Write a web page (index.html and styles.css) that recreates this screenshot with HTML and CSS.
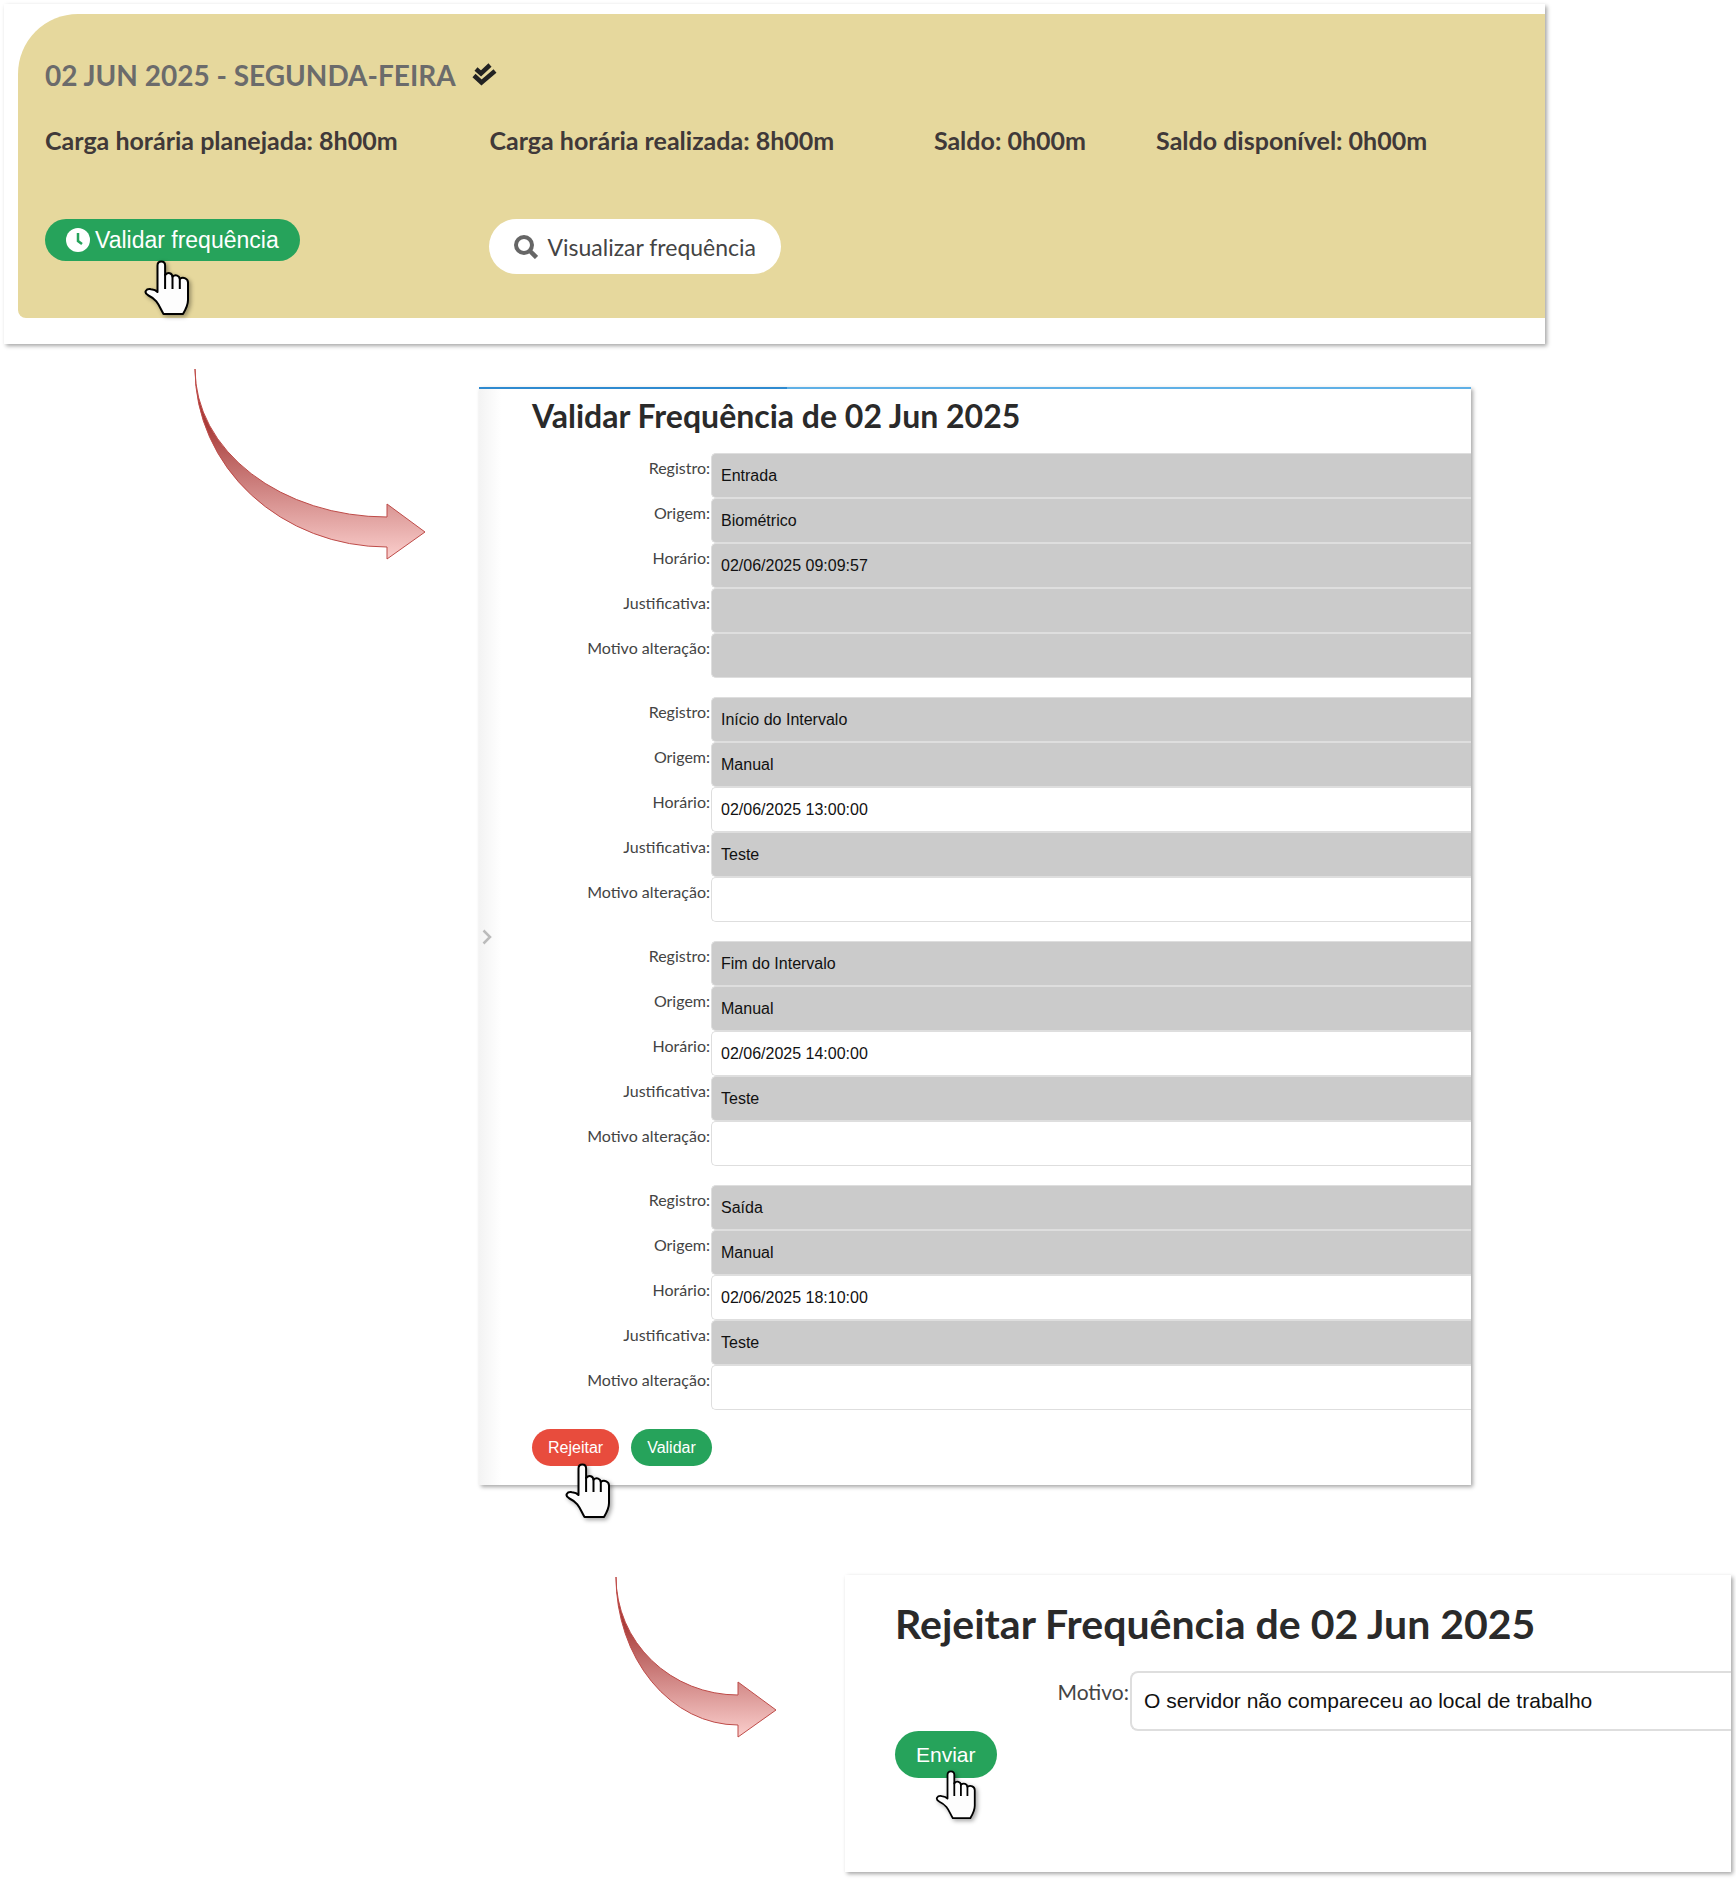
FILE: index.html
```html
<!DOCTYPE html>
<html lang="pt-BR">
<head>
  <meta charset="UTF-8">
  <title>Validar Frequência</title>
  <link rel="stylesheet" href="styles.css">
</head>
<body>
  <!-- Shared shapes -->
  <svg class="defs" width="0" height="0" aria-hidden="true">
    <defs>
      <linearGradient id="arrow-fill" x1="0" y1="0" x2="0" y2="1">
        <stop offset="0.3" stop-color="#a93c39"/>
        <stop offset="0.5" stop-color="#c06a68"/>
        <stop offset="1" stop-color="#fbcfcd"/>
      </linearGradient>
      <symbol id="hand" viewBox="0 0 46 56">
        <path d="M13.500 32V5.500c0-5.400 7.600-5.400 7.600 0V15c3-3.500 7-1.600 7.400 1.600 3.200-2.600 6.900-.800 7.300 2.200 3.600-2.200 8.200-.2 8.200 3.800V40c0 5-2.300 9.500-5 14H19.500C15 46.500 14 40 4.500 35.500c-5.500-3-2.500-7 2.500-6.300 3 .3 5 1 6.500 2.800z" fill="#fdfdfd" stroke="#000" stroke-width="2" stroke-linejoin="round"/>
        <path d="M21.100 14v15M28.500 16v13M35.800 18v11" fill="none" stroke="#000" stroke-width="2"/>
      </symbol>
    </defs>
  </svg>

  <div class="panel panel-day">
    <div class="day-card">
      <h3 class="day-title">02 JUN 2025 - SEGUNDA-FEIRA
        <svg class="check-icon" viewBox="0 0 26 24"><path d="M4 6l5 4.500L18 2M2 12.500l7.500 7L23 8" fill="none" stroke="#222" stroke-width="4.500"/></svg>
      </h3>
      <div class="day-grid">
        <div class="stat">Carga horária planejada: 8h00m</div>
        <div class="stat">Carga horária realizada: 8h00m</div>
        <div class="stat">Saldo: 0h00m</div>
        <div class="stat">Saldo disponível: 0h00m</div>
        <div class="action">
          <button class="btn btn-green btn-day" type="button">
            <svg class="clock-icon" viewBox="0 0 24 24"><circle cx="12" cy="12" r="12" fill="#fff"/><path d="M12 5v8l4 3" fill="none" stroke="#26a35b" stroke-width="2.500"/></svg>
            Validar frequência
          </button>
          <svg class="cursor cursor-day"><use href="#hand"/></svg>
        </div>
        <div class="action">
          <button class="btn btn-white" type="button">
            <svg class="search-icon" viewBox="0 0 24 24"><circle cx="10" cy="10" r="8" fill="none" stroke="#666" stroke-width="4"/><path d="M15.500 15.500l7 7" stroke="#666" stroke-width="4.500"/></svg>
            Visualizar frequência
          </button>
        </div>
      </div>
    </div>
  </div>

  <div class="step step-validate">
    <svg class="arrow arrow-long" viewBox="0 0 234 192">
      <path d="M1 1A192 148 0 0 0 193 149V136L231 164 193 191V179A192 178 0 0 1 1 1z" fill="url(#arrow-fill)" stroke="#be4b48"/>
    </svg>
    <div class="panel panel-validate">
      <div class="progress"><div class="progress-done"></div></div>
      <div class="side"><svg class="chevron" viewBox="0 0 10 16"><path d="M1.500 1.500L8 8l-6.500 6.500" fill="none" stroke="#bbb" stroke-width="2.500"/></svg></div>
      <form class="form">
        <h2 class="form-title">Validar Frequência de 02 Jun 2025</h2>

        <div class="group">
          <label for="registro1">Registro:</label>
          <input id="registro1" type="text" value="Entrada" readonly>
          <label for="origem1">Origem:</label>
          <input id="origem1" type="text" value="Biométrico" readonly>
          <label for="horario1">Horário:</label>
          <input id="horario1" type="text" value="02/06/2025 09:09:57" readonly>
          <label for="justificativa1">Justificativa:</label>
          <input id="justificativa1" type="text" value="" readonly>
          <label for="motivo1">Motivo alteração:</label>
          <input id="motivo1" type="text" value="" readonly>
        </div>

        <div class="group">
          <label for="registro2">Registro:</label>
          <input id="registro2" type="text" value="Início do Intervalo" readonly>
          <label for="origem2">Origem:</label>
          <input id="origem2" type="text" value="Manual" readonly>
          <label for="horario2">Horário:</label>
          <input id="horario2" type="text" value="02/06/2025 13:00:00">
          <label for="justificativa2">Justificativa:</label>
          <input id="justificativa2" type="text" value="Teste" readonly>
          <label for="motivo2">Motivo alteração:</label>
          <input id="motivo2" type="text" value="">
        </div>

        <div class="group">
          <label for="registro3">Registro:</label>
          <input id="registro3" type="text" value="Fim do Intervalo" readonly>
          <label for="origem3">Origem:</label>
          <input id="origem3" type="text" value="Manual" readonly>
          <label for="horario3">Horário:</label>
          <input id="horario3" type="text" value="02/06/2025 14:00:00">
          <label for="justificativa3">Justificativa:</label>
          <input id="justificativa3" type="text" value="Teste" readonly>
          <label for="motivo3">Motivo alteração:</label>
          <input id="motivo3" type="text" value="">
        </div>

        <div class="group">
          <label for="registro4">Registro:</label>
          <input id="registro4" type="text" value="Saída" readonly>
          <label for="origem4">Origem:</label>
          <input id="origem4" type="text" value="Manual" readonly>
          <label for="horario4">Horário:</label>
          <input id="horario4" type="text" value="02/06/2025 18:10:00">
          <label for="justificativa4">Justificativa:</label>
          <input id="justificativa4" type="text" value="Teste" readonly>
          <label for="motivo4">Motivo alteração:</label>
          <input id="motivo4" type="text" value="">
        </div>

        <div class="buttons">
          <button class="btn btn-red" type="button">Rejeitar</button>
          <button class="btn btn-green" type="button">Validar</button>
          <svg class="cursor cursor-reject"><use href="#hand"/></svg>
        </div>
      </form>
    </div>
  </div>

  <div class="step step-reject">
    <svg class="arrow arrow-short" viewBox="0 0 163 163">
      <path d="M1 1A122 118 0 0 0 123 119V106L161 134 123 161V149A122 148 0 0 1 1 1z" fill="url(#arrow-fill)" stroke="#be4b48"/>
    </svg>
    <div class="panel panel-reject">
      <form class="form form-large">
        <h2 class="form-title">Rejeitar Frequência de 02 Jun 2025</h2>
        <div class="group">
          <label for="motivo">Motivo:</label>
          <input id="motivo" type="text" value="O servidor não compareceu ao local de trabalho">
        </div>
        <div class="buttons">
          <button class="btn btn-green" type="button">Enviar</button>
          <svg class="cursor cursor-send"><use href="#hand"/></svg>
        </div>
      </form>
    </div>
  </div>
</body>
</html>
```

FILE: styles.css
```css
* {
  box-sizing: border-box;
}

body {
  margin: 0;
  padding: 4px 5px 8px 4px;
  background-color: #fff;
  color: #444;
  font-family: Lato, sans-serif;
}

h2,
h3 {
  margin: 0;
}

svg {
  display: block;
}

.defs {
  position: absolute;
}

.panel {
  position: relative;
  background-color: #fff;
  box-shadow: 2px 2px 4px rgba(0, 0, 0, 0.35);
}

/* Day card */
.panel-day {
  margin-right: 186px;
  padding: 10px 0 26px 14px;
}

.day-card {
  padding: 44px 0 44px 27px;
  background-color: #e6d89d;
  border-radius: 60px 0 0 8px;
}

.day-title {
  display: flex;
  align-items: center;
  gap: 16px;
  color: #6b6b6b;
  font-size: 28px;
  line-height: 34px;
}

.check-icon {
  width: 26px;
  height: 24px;
}

.day-grid {
  display: grid;
  grid-template-columns: 8fr 8fr 4fr 7fr;
  row-gap: 65px;
  align-items: start;
  margin-top: 34px;
}

.stat {
  color: #403939;
  font-size: 25px;
  font-weight: bold;
  line-height: 28px;
  white-space: nowrap;
}

.action {
  position: relative;
}

/* Buttons */
.btn {
  display: flex;
  align-items: center;
  justify-content: center;
  height: 37px;
  padding: 0 16px;
  border: none;
  border-radius: 30px;
  color: #fff;
  font-family: "Liberation Sans", Arial, sans-serif;
  font-size: 16px;
  cursor: pointer;
}

.btn-green {
  background-color: #26a35b;
}

.btn-red {
  background-color: #e84c3d;
}

.btn-day {
  height: 42px;
  gap: 5px;
  padding: 0 21px;
  font-size: 23px;
}

.btn-white {
  height: 55px;
  gap: 9px;
  padding: 0 25px;
  background-color: #fff;
  color: #444;
  font-family: Lato, sans-serif;
  font-size: 23px;
}

.clock-icon,
.search-icon {
  width: 24px;
  height: 24px;
}

.cursor {
  position: absolute;
  width: 46px;
  height: 56px;
  filter: drop-shadow(2px 2px 2px rgba(0, 0, 0, 0.35));
}

.cursor-day {
  top: 41px;
  left: 99px;
}

.cursor-reject {
  top: 34px;
  left: 33px;
}

.cursor-send {
  top: 39px;
  left: 40px;
  width: 42px;
  height: 50px;
}

/* Steps with the arrow on the left */
.step {
  display: flex;
  align-items: flex-start;
}

.step-validate {
  gap: 51px;
  margin-top: 24px;
  padding: 0 260px 0 190px;
}

.step-reject {
  gap: 67px;
  margin-top: 90px;
  padding-left: 611px;
}

.arrow {
  flex: none;
}

.arrow-long {
  width: 234px;
  height: 192px;
}

.arrow-short {
  width: 163px;
  height: 163px;
  margin-top: 1px;
}

.panel-validate,
.panel-reject {
  flex: 1;
}

.panel-validate {
  margin-top: 19px;
}

.progress {
  height: 2px;
  background-color: #5fb0e6;
}

.progress-done {
  width: 31%;
  height: 2px;
  background-color: #2e8ad0;
}

.side {
  position: absolute;
  top: 2px;
  bottom: 0;
  left: 0;
  display: flex;
  align-items: center;
  width: 22px;
  padding-left: 3px;
  background: linear-gradient(to right, #f3f3f3, #fff);
}

.chevron {
  width: 10px;
  height: 16px;
}

/* Forms */
.form {
  padding: 7px 0 19px 53px;
}

.form-title {
  margin-bottom: 17px;
  color: #2a2a2a;
  font-size: 32px;
  line-height: 40px;
}

.group {
  display: grid;
  grid-template-columns: 179px 1fr;
  margin-bottom: 19px;
}

.group label {
  padding-top: 5px;
  padding-right: 1px;
  font-size: 16px;
  line-height: 20px;
  text-align: right;
}

.group input {
  width: 100%;
  height: 45px;
  padding: 0 9px;
  border: 1px solid #dedede;
  border-right: none;
  border-radius: 5px 0 0 5px;
  background-color: #fff;
  color: #111;
  font-family: "Liberation Sans", Arial, sans-serif;
  font-size: 16px;
}

.group input:read-only {
  background-color: #cbcbcb;
}

.buttons {
  position: relative;
  display: flex;
  gap: 12px;
}

.form-large {
  padding: 24px 0 94px 50px;
}

.form-large .form-title {
  margin-bottom: 22px;
  font-size: 41px;
  line-height: 50px;
}

.form-large .group {
  grid-template-columns: 235px 1fr;
  margin-bottom: 0;
}

.form-large label {
  padding-top: 8px;
  font-size: 21px;
  line-height: 26px;
}

.form-large input {
  height: 60px;
  padding: 0 12px;
  border-width: 2px;
  border-radius: 8px 0 0 8px;
  font-size: 21px;
}

.form-large .btn {
  height: 47px;
  padding: 0 21px;
  font-size: 21px;
}
```
